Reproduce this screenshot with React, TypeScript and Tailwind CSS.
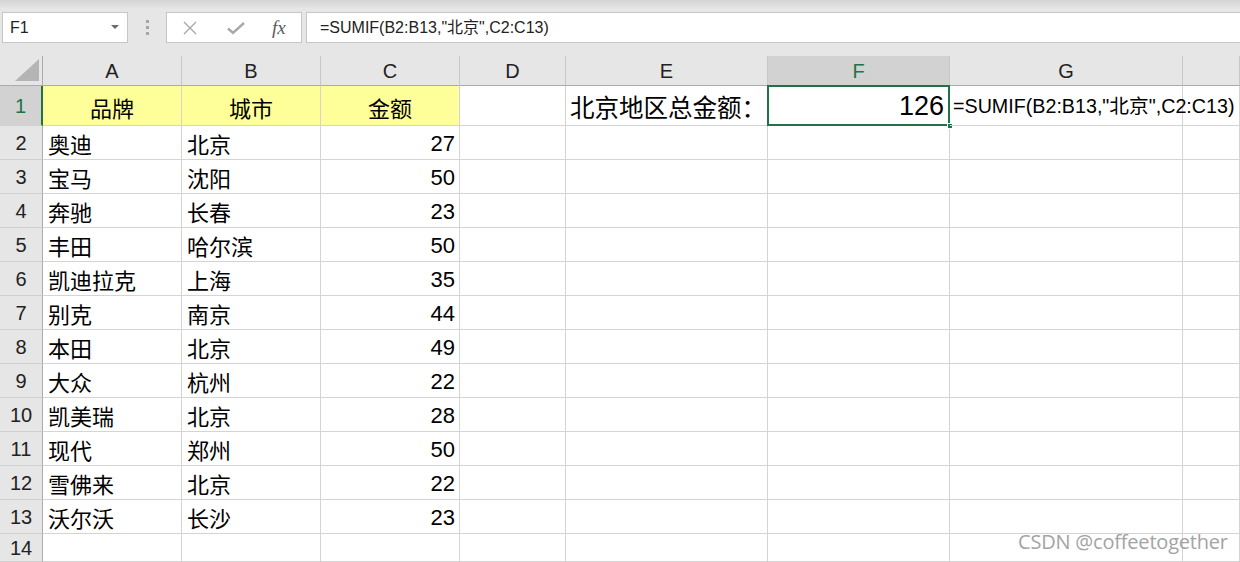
import React from "react";

const rows: [string, string, number][] = [
  ["奥迪", "北京", 27],
  ["宝马", "沈阳", 50],
  ["奔驰", "长春", 23],
  ["丰田", "哈尔滨", 50],
  ["凯迪拉克", "上海", 35],
  ["别克", "南京", 44],
  ["本田", "北京", 49],
  ["大众", "杭州", 22],
  ["凯美瑞", "北京", 28],
  ["现代", "郑州", 50],
  ["雪佛来", "北京", 22],
  ["沃尔沃", "长沙", 23],
];

const cols = ["A", "B", "C", "D", "E", "F", "G", ""];

const FONT = "font-['Liberation_Sans','Noto_Sans_CJK_SC',sans-serif]";
const CJK = "font-['Noto_Sans_CJK_SC',sans-serif]";

function RowHead({ n, sel }: { n: number; sel?: boolean }) {
  return (
    <div
      className={
        "flex items-center justify-center text-[20px] border-b border-[#d0d0d0] " +
        (sel
          ? "bg-[#d2d2d2] text-[#217346] border-r-2 border-r-[#217346]"
          : "bg-[#e6e6e6] text-[#222222] border-r border-r-[#ababab]")
      }
    >
      {n}
    </div>
  );
}

function Cell({
  children,
  className = "",
}: {
  children?: React.ReactNode;
  className?: string;
}) {
  return (
    <div
      className={
        "flex items-center border-r border-b border-[#d4d4d4] whitespace-nowrap text-black overflow-visible " +
        className
      }
    >
      {children}
    </div>
  );
}

export default function App() {
  return (
    <div className={"relative w-[1240px] h-[562px] overflow-hidden bg-white " + FONT}>
      {/* Formula bar */}
      <div className="h-[56px] bg-[linear-gradient(#d4d4d4,#e6e6e6_9px)] flex items-start pt-[12px]">
        <div className="ml-[2px] w-[126px] h-[31px] bg-white border border-[#c6c6c6] flex items-center justify-between pl-[7px] pr-[8px]">
          <span className="text-[16px] text-[#222]">F1</span>
          <svg width="8" height="5" viewBox="0 0 8 5">
            <path d="M0 0 L8 0 L4 4 Z" fill="#6b6b6b" />
          </svg>
        </div>
        <div className="w-[38px] h-[31px] flex flex-col items-center justify-center gap-[3px]">
          <div className="w-[3px] h-[3px] bg-[#a6a6a6]" />
          <div className="w-[3px] h-[3px] bg-[#a6a6a6]" />
          <div className="w-[3px] h-[3px] bg-[#a6a6a6]" />
        </div>
        <div className="w-[136px] h-[31px] bg-white border border-[#c6c6c6] flex items-center pl-[15px]">
          <svg width="16" height="16" viewBox="0 0 16 16" className="mr-[29px]">
            <path d="M2 2 L14 14 M14 2 L2 14" stroke="#a8a8a8" strokeWidth="1.4" />
          </svg>
          <svg width="18" height="16" viewBox="0 0 18 16" className="mr-[27px]">
            <path d="M1 8.5 L6 13 L17 3" stroke="#a8a8a8" strokeWidth="2.4" fill="none" />
          </svg>
          <span className="font-['Liberation_Serif',serif] italic text-[19px] text-[#5a5a5a] leading-none">
            fx
          </span>
        </div>
        <div className="ml-[4px] flex-1 h-[31px] bg-white border-y border-l border-[#c6c6c6] flex items-center pl-[13px] text-[16px] text-[#222]">
          =SUMIF(B2:B13,"北京",C2:C13)
        </div>
      </div>

      {/* Sheet grid */}
      <div className="grid grid-cols-[43px_139px_139px_139px_106px_202px_182px_233px_1fr] grid-rows-[30px_40px_repeat(12,34px)_28px]">
        {/* corner */}
        <div className="bg-[#e6e6e6] border-r border-b border-[#ababab] flex items-end justify-end pr-[3px] pb-[4px]">
          <svg width="24" height="22" viewBox="0 0 24 22">
            <path d="M24 0 L24 22 L0 22 Z" fill="#b4b4b4" />
          </svg>
        </div>
        {cols.map((c, i) => (
          <div
            key={i}
            className={
              "flex items-center justify-center text-[20px] border-r border-r-[#c8c8c8] border-b " +
              (c === "F"
                ? "bg-[#d2d2d2] text-[#217346] border-b-[#217346]"
                : "bg-[#e6e6e6] text-[#222222] border-b-[#ababab]")
            }
          >
            {c}
          </div>
        ))}

        {/* Row 1 */}
        <RowHead n={1} sel />
        <Cell className={"bg-[#ffff99] justify-center pt-[3px] text-[22px] " + CJK}>品牌</Cell>
        <Cell className={"bg-[#ffff99] justify-center pt-[3px] text-[22px] " + CJK}>城市</Cell>
        <Cell className={"bg-[#ffff99] justify-center pt-[3px] text-[22px] " + CJK}>金额</Cell>
        <Cell />
        <Cell className={"justify-end pt-[3px] pr-[1px] text-[24.5px] " + CJK}>
          北京地区总金额：
        </Cell>
        <Cell className="relative justify-end pr-[5px] pt-[2px] text-[27px]">
          126
          <div className="absolute left-[-1px] top-[-1px] right-[-1px] bottom-[-1px] border-2 border-[#217346] pointer-events-none" />
          <div className="absolute right-[-4px] bottom-[-4px] w-[6px] h-[6px] bg-[#217346] border border-white" />
        </Cell>
        <Cell className="pl-[3px] pt-[2px] text-[19.7px] relative z-10">
          =SUMIF(B2:B13,"北京",C2:C13)
        </Cell>
        <Cell />

        {rows.map(([brand, city, amt], i) => (
          <React.Fragment key={i}>
            <RowHead n={i + 2} />
            <Cell className={"pl-[5px] pt-[2px] text-[22px] " + CJK}>{brand}</Cell>
            <Cell className={"pl-[5px] pt-[2px] text-[22px] " + CJK}>{city}</Cell>
            <Cell className="justify-end pr-[4px] pt-[2px] text-[22px]">{amt}</Cell>
            <Cell />
            <Cell />
            <Cell />
            <Cell />
            <Cell />
          </React.Fragment>
        ))}

        <RowHead n={14} />
        <Cell />
        <Cell />
        <Cell />
        <Cell />
        <Cell />
        <Cell />
        <Cell />
        <Cell />
      </div>

      <div className="absolute left-[1018px] top-[527px] text-[20px] text-[#9a9a9a] font-['Open_Sans',sans-serif] tracking-[-0.2px] opacity-90">
        CSDN @coffeetogether
      </div>
    </div>
  );
}
